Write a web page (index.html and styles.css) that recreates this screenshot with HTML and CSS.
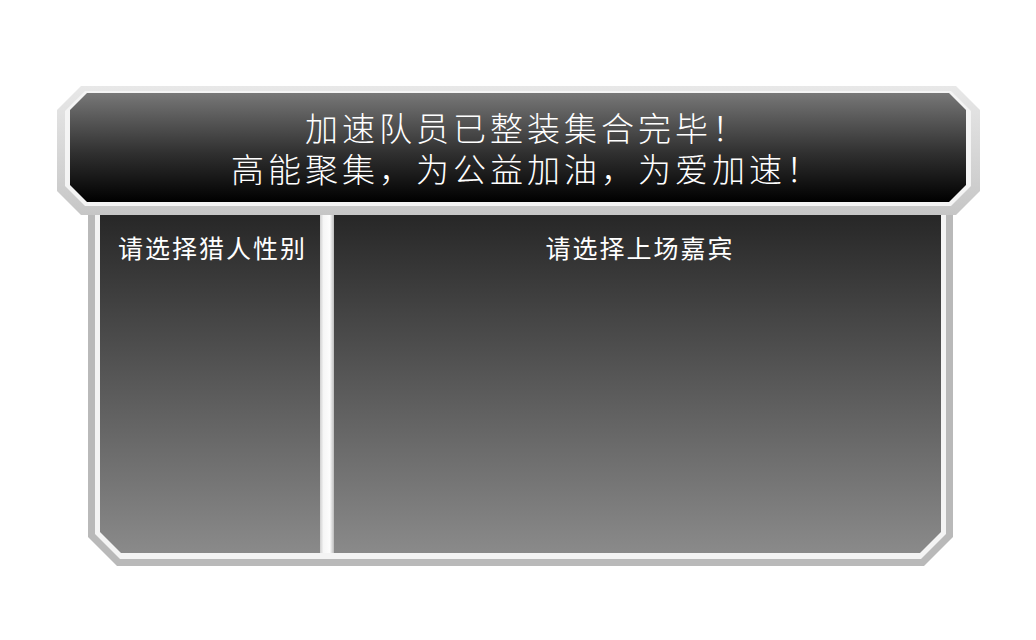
FILE: index.html
```html
<!DOCTYPE html>
<html lang="zh-CN">
<head>
    <meta charset="UTF-8">
    <meta name="viewport" content="width=device-width, initial-scale=1.0">
    <title>加速队员集合</title>
    <link rel="stylesheet" href="styles.css">
</head>
<body>

<div class="stage">
    <!-- top banner -->
    <div class="banner">
        <div class="banner-edge">
            <div class="banner-face">
                <p>加速队员已整装集合完毕！</p>
                <p>高能聚集，为公益加油，为爱加速！</p>
            </div>
        </div>
    </div>

    <!-- selection panel -->
    <div class="panel">
        <div class="panel-edge">
            <div class="panel-face">
                <div class="col col-gender">请选择猎人性别</div>
                <div class="divider"></div>
                <div class="col col-guest">请选择上场嘉宾</div>
            </div>
        </div>
    </div>
</div>

</body>
</html>
```

FILE: styles.css
```css
body {
    margin: 0;
    padding: 0;
    background-color: #fff;
    font-family: "Noto Sans CJK SC", "Noto Sans", sans-serif;
    color: #fff;
}

.stage {
    width: 923px;
    margin: 86px 0 0 57px;
}

/* banner: gray frame > white line > dark face */
.banner {
    padding: 5px 9px 9px 8px;
    background: linear-gradient(#e8e8e8, #c6c6c6);
    clip-path: polygon(24px 0, calc(100% - 24px) 0, 100% 24px, 100% calc(100% - 24px), calc(100% - 24px) 100%, 24px 100%, 0 calc(100% - 24px), 0 24px);
}

.banner-edge {
    padding: 2px 5px 4px 5px;
    background-color: #f4f4f4;
    clip-path: polygon(20px 0, calc(100% - 20px) 0, 100% 20px, 100% calc(100% - 20px), calc(100% - 20px) 100%, 20px 100%, 0 calc(100% - 20px), 0 20px);
}

.banner-face {
    height: 109px;
    box-sizing: border-box;
    padding-top: 14px;
    background: linear-gradient(#777, #303030 55%, #000);
    clip-path: polygon(17px 0, calc(100% - 17px) 0, 100% 17px, 100% calc(100% - 17px), calc(100% - 17px) 100%, 17px 100%, 0 calc(100% - 17px), 0 17px);
    text-align: center;
}

.banner-face p {
    margin: 0;
    padding-left: 18px;
    font-size: 33px;
    line-height: 41px;
    letter-spacing: 4px;
    font-weight: 300;
}

/* panel: open at the top, chamfered at the bottom */
.panel {
    margin: 0 27px 0 31px;
    padding: 0 7px 7px 7px;
    background-color: #b9b9b9;
    clip-path: polygon(0 0, 100% 0, 100% calc(100% - 29px), calc(100% - 29px) 100%, 29px 100%, 0 calc(100% - 29px));
}

.panel-edge {
    padding: 0 5px 6px 5px;
    background-color: #f4f4f4;
    clip-path: polygon(0 0, 100% 0, 100% calc(100% - 25px), calc(100% - 25px) 100%, 25px 100%, 0 calc(100% - 25px));
}

.panel-face {
    display: flex;
    height: 338px;
    background: linear-gradient(#272727, #8a8a8a);
    clip-path: polygon(0 0, 100% 0, 100% calc(100% - 21px), calc(100% - 21px) 100%, 21px 100%, 0 calc(100% - 21px));
}

.col {
    box-sizing: border-box;
    padding-top: 14px;
    padding-left: 5px;
    font-size: 25px;
    line-height: 36px;
    letter-spacing: 2px;
    text-align: center;
}

.col-gender {
    width: 220px;
}

.col-guest {
    flex: 1;
}

.divider {
    width: 14px;
    background: linear-gradient(to right, #cfcfcf, #f6f6f6 25%, #fdfdfd 70%, #bcbcbc);
}
```
